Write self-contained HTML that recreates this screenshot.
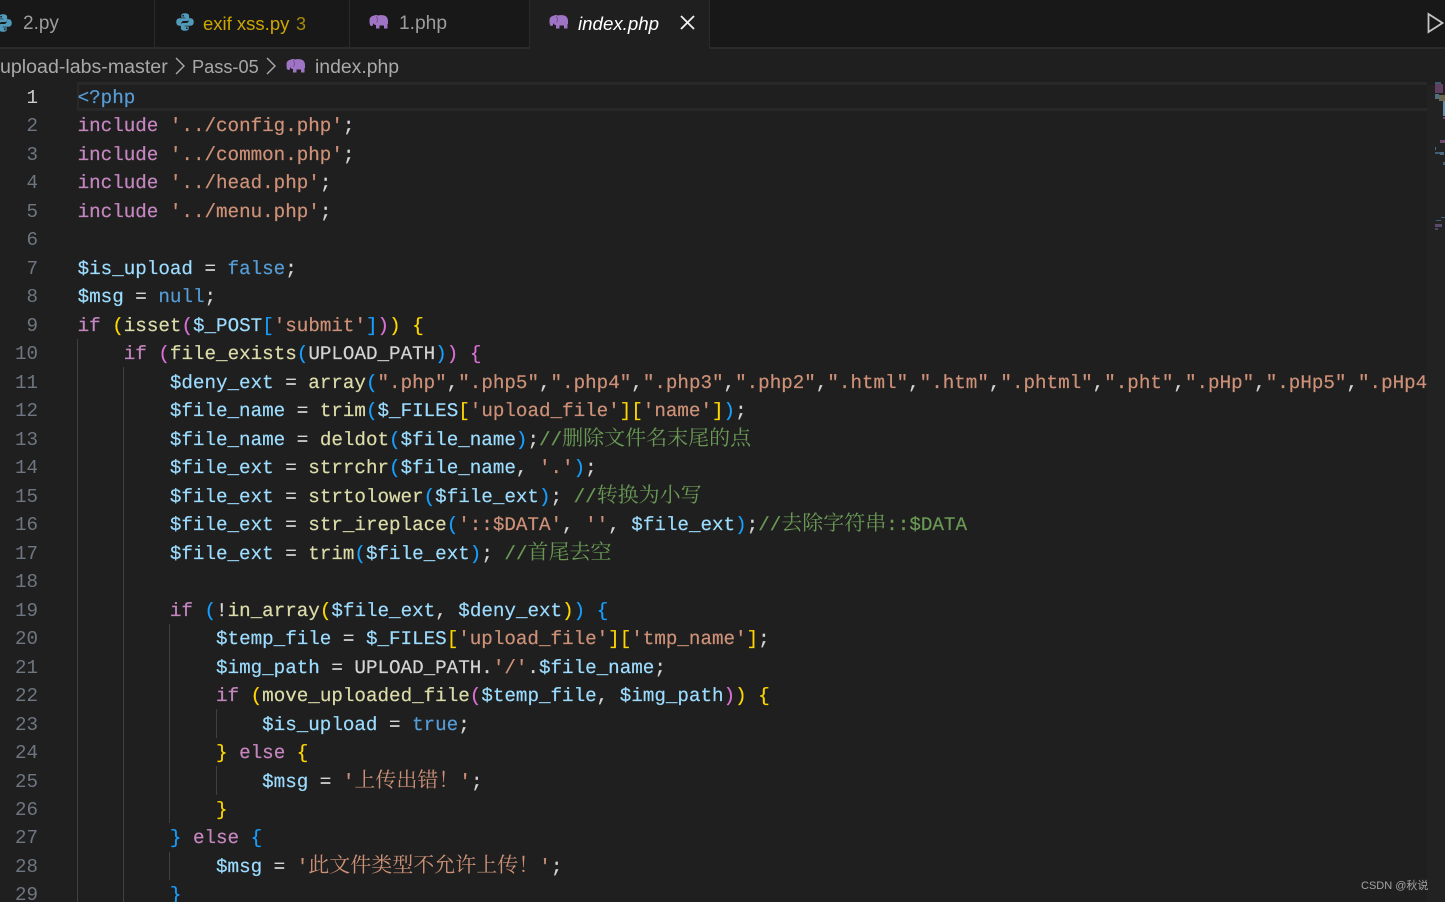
<!DOCTYPE html>
<html lang="zh">
<head>
<meta charset="utf-8">
<title>index.php</title>
<style>
html,body{margin:0;padding:0;background:#1f1f1f;}
#app{position:relative;width:1445px;height:902px;overflow:hidden;background:#1f1f1f;}
.abs{position:absolute;}
.ui{font-family:"Liberation Sans","Noto Sans CJK SC",sans-serif;white-space:pre;position:absolute;}
#code{position:absolute;left:0;top:1px;width:1445px;height:901px;}
.ln{position:absolute;left:0;width:38px;text-align:right;height:28.48px;font:19.2px/28.48px "Liberation Mono",monospace;color:#6e7681;}
.l{position:absolute;left:77.6px;height:28.48px;white-space:pre;font:19.23px/28.48px "Liberation Mono","Noto Serif CJK SC",monospace;color:#d4d4d4;text-rendering:geometricPrecision;-webkit-text-stroke:.2px;}
.l i{font-style:normal;font-family:"Noto Serif CJK SC",serif;font-size:21px;line-height:0;-webkit-text-stroke:0;}
.k{color:#c586c0}.f{color:#dcdcaa}.v{color:#9cdcfe}.s{color:#ce9178}.c{color:#6a9955}.b{color:#569cd6}
.y{color:#ffd700}.p{color:#da70d6}.u{color:#179fff}
.g{position:absolute;width:1px;background:#404040;}
.m{position:absolute;}
</style>
</head>
<body>
<div id="app">
<!-- tab bar -->
<div class="abs" style="left:0;top:0;width:1445px;height:47px;background:#181818"></div>
<div class="abs" style="left:0;top:47px;width:1445px;height:2px;background:#2b2b2b"></div>
<div class="abs" style="left:154px;top:0;width:1px;height:47px;background:#2b2b2b"></div>
<div class="abs" style="left:349px;top:0;width:1px;height:47px;background:#2b2b2b"></div>
<div class="abs" style="left:529px;top:0;width:181px;height:49px;background:#1f1f1f;border-left:1px solid #2b2b2b;border-right:1px solid #2b2b2b;box-sizing:border-box"></div>

<svg class="abs" style="left:-8px;top:13px" width="22" height="20" viewBox="0 0 16 16"><path fill="#519aba" d="M8 1c-2.500 0-3 1-3 2v1.500h3.200V5H3.500C2 5 1 6.200 1 8s1 3 2.300 3H5V9.300C5 8 6 7.200 7.200 7.200h2.400c1 0 1.700-.7 1.700-1.700V3C11.300 1.800 10 1 8 1zM6.500 2.300a.7.7 0 1 1 0 1.400.7.7 0 0 1 0-1.400z"/><path fill="#519aba" d="M8 15c2.500 0 3-1 3-2v-1.500H7.800V11h4.700c1.500 0 2.500-1.200 2.500-3s-1-3-2.300-3H11v1.700C11 8 10 8.800 8.800 8.800H6.400c-1 0-1.700.7-1.700 1.700V13c0 1.200 1.300 2 3.300 2zm1.500-1.300a.7.7 0 1 1 0-1.400.7.7 0 0 1 0 1.400z"/></svg>
<div class="ui" style="left:23px;top:11px;font-size:19px;line-height:26px;color:#9d9d9d">2.py</div>

<svg class="abs" style="left:175px;top:12px" width="20" height="20" viewBox="0 0 16 16"><path fill="#519aba" d="M8 1c-2.500 0-3 1-3 2v1.500h3.200V5H3.500C2 5 1 6.200 1 8s1 3 2.300 3H5V9.300C5 8 6 7.200 7.200 7.200h2.400c1 0 1.700-.7 1.700-1.700V3C11.300 1.800 10 1 8 1zM6.500 2.300a.7.7 0 1 1 0 1.400.7.7 0 0 1 0-1.400z"/><path fill="#519aba" d="M8 15c2.500 0 3-1 3-2v-1.500H7.800V11h4.700c1.500 0 2.500-1.200 2.500-3s-1-3-2.300-3H11v1.700C11 8 10 8.800 8.800 8.800H6.400c-1 0-1.700.7-1.700 1.700V13c0 1.200 1.300 2 3.300 2zm1.500-1.300a.7.7 0 1 1 0-1.400.7.7 0 0 1 0 1.400z"/></svg>
<div class="ui" style="left:203px;top:11px;font-size:18.5px;line-height:26px;color:#cca700">exif xss.py</div>
<div class="ui" style="left:296px;top:11px;font-size:18px;line-height:26px;color:#a58a0c">3</div>

<svg class="abs" style="left:369px;top:14px" width="20" height="16" viewBox="0 0 20 16"><path fill="#a074c4" d="M5 1.500C7 .8 8 1 9 1.600C10 1 12 1 14 1.200C17 1.500 19 3.500 19 7V10H18.500V14.500H15V11.500H10.500V14.500H7V11C5.500 11 4.500 10 4 9V11C3.500 12.500 1.500 12 1 11C.5 9.500 .5 8 .5 6C.5 3.500 2.500 2 5 1.500Z"/><path fill="none" stroke="#6f4f8f" stroke-width=".8" d="M7 2.500c2 1.500 2 4.500.3 6"/></svg>
<div class="ui" style="left:399px;top:11px;font-size:19.2px;line-height:26px;color:#9d9d9d">1.php</div>

<svg class="abs" style="left:549px;top:14px" width="20" height="16" viewBox="0 0 20 16"><path fill="#a074c4" d="M5 1.500C7 .8 8 1 9 1.600C10 1 12 1 14 1.200C17 1.500 19 3.500 19 7V10H18.500V14.500H15V11.500H10.500V14.500H7V11C5.500 11 4.500 10 4 9V11C3.500 12.500 1.500 12 1 11C.5 9.500 .5 8 .5 6C.5 3.500 2.500 2 5 1.500Z"/><path fill="none" stroke="#6f4f8f" stroke-width=".8" d="M7 2.500c2 1.500 2 4.500.3 6"/></svg>
<div class="ui" style="left:578px;top:11px;font-size:18.7px;line-height:26px;color:#ffffff;font-style:italic">index.php</div>
<svg class="abs" style="left:680px;top:15px" width="15" height="15" viewBox="0 0 15 15"><path d="M1 1L14 14M14 1L1 14" stroke="#f2f2f2" stroke-width="1.800" fill="none"/></svg>

<svg class="abs" style="left:1427px;top:12px" width="18" height="22" viewBox="0 0 18 22"><path d="M1.500 2L15.500 11L1.500 20Z" fill="none" stroke="#c5c5c5" stroke-width="1.800"/></svg>

<!-- breadcrumb -->
<div class="ui" style="left:0;top:54px;font-size:19.6px;line-height:26px;color:#a9a9a9">upload-labs-master</div>
<svg class="abs" style="left:174px;top:56px" width="12" height="20" viewBox="0 0 12 20"><path d="M2 2L10 10L2 18" fill="none" stroke="#a9a9a9" stroke-width="1.400"/></svg>
<div class="ui" style="left:192px;top:54px;font-size:18.2px;line-height:26px;color:#a9a9a9">Pass-05</div>
<svg class="abs" style="left:265px;top:56px" width="12" height="20" viewBox="0 0 12 20"><path d="M2 2L10 10L2 18" fill="none" stroke="#a9a9a9" stroke-width="1.400"/></svg>
<svg class="abs" style="left:286px;top:58px" width="20" height="16" viewBox="0 0 20 16"><path fill="#a074c4" d="M5 1.500C7 .8 8 1 9 1.600C10 1 12 1 14 1.200C17 1.500 19 3.500 19 7V10H18.500V14.500H15V11.500H10.500V14.500H7V11C5.500 11 4.500 10 4 9V11C3.500 12.500 1.500 12 1 11C.5 9.500 .5 8 .5 6C.5 3.500 2.500 2 5 1.500Z"/><path fill="none" stroke="#6f4f8f" stroke-width=".8" d="M7 2.500c2 1.500 2 4.500.3 6"/></svg>
<div class="ui" style="left:315px;top:54px;font-size:19.4px;line-height:26px;color:#a9a9a9">index.php</div>

<!-- current line highlight -->
<div class="abs" style="left:77px;top:82px;width:1350px;height:3px;background:#282828"></div>
<div class="abs" style="left:77px;top:108px;width:1350px;height:3px;background:#282828"></div>
<div class="abs" style="left:77px;top:82px;width:2px;height:29px;background:#282828"></div>

<!-- indent guides -->
<div class="g" style="left:77px;top:339px;height:563px"></div>
<div class="g" style="left:123px;top:367px;height:535px"></div>
<div class="g" style="left:169px;top:624px;height:199px"></div>
<div class="g" style="left:169px;top:852px;height:28px"></div>
<div class="g" style="left:216px;top:709px;height:29px"></div>
<div class="g" style="left:216px;top:766px;height:29px"></div>

<div id="code">
<!-- line numbers -->
<div class="ln" style="top:83px;color:#cccccc">1</div>
<div class="ln" style="top:111.480px">2</div>
<div class="ln" style="top:139.960px">3</div>
<div class="ln" style="top:168.440px">4</div>
<div class="ln" style="top:196.920px">5</div>
<div class="ln" style="top:225.400px">6</div>
<div class="ln" style="top:253.880px">7</div>
<div class="ln" style="top:282.360px">8</div>
<div class="ln" style="top:310.840px">9</div>
<div class="ln" style="top:339.320px">10</div>
<div class="ln" style="top:367.800px">11</div>
<div class="ln" style="top:396.280px">12</div>
<div class="ln" style="top:424.760px">13</div>
<div class="ln" style="top:453.240px">14</div>
<div class="ln" style="top:481.720px">15</div>
<div class="ln" style="top:510.200px">16</div>
<div class="ln" style="top:538.680px">17</div>
<div class="ln" style="top:567.160px">18</div>
<div class="ln" style="top:595.640px">19</div>
<div class="ln" style="top:624.120px">20</div>
<div class="ln" style="top:652.600px">21</div>
<div class="ln" style="top:681.080px">22</div>
<div class="ln" style="top:709.560px">23</div>
<div class="ln" style="top:738.040px">24</div>
<div class="ln" style="top:766.520px">25</div>
<div class="ln" style="top:795px">26</div>
<div class="ln" style="top:823.480px">27</div>
<div class="ln" style="top:851.960px">28</div>
<div class="ln" style="top:880.440px">29</div>

<!-- code -->
<div class="l" style="top:83px"><span class="b">&lt;?php</span></div>
<div class="l" style="top:111.480px"><span class="k">include</span> <span class="s">'../config.php'</span>;</div>
<div class="l" style="top:139.960px"><span class="k">include</span> <span class="s">'../common.php'</span>;</div>
<div class="l" style="top:168.440px"><span class="k">include</span> <span class="s">'../head.php'</span>;</div>
<div class="l" style="top:196.920px"><span class="k">include</span> <span class="s">'../menu.php'</span>;</div>
<div class="l" style="top:253.880px"><span class="v">$is_upload</span> = <span class="b">false</span>;</div>
<div class="l" style="top:282.360px"><span class="v">$msg</span> = <span class="b">null</span>;</div>
<div class="l" style="top:310.840px"><span class="k">if</span> <span class="y">(</span><span class="f">isset</span><span class="p">(</span><span class="v">$_POST</span><span class="u">[</span><span class="s">'submit'</span><span class="u">]</span><span class="p">)</span><span class="y">)</span> <span class="y">{</span></div>
<div class="l" style="top:339.320px">    <span class="k">if</span> <span class="p">(</span><span class="f">file_exists</span><span class="u">(</span>UPLOAD_PATH<span class="u">)</span><span class="p">)</span> <span class="p">{</span></div>
<div class="l" style="top:367.800px">        <span class="v">$deny_ext</span> = <span class="f">array</span><span class="u">(</span><span class="s">".php"</span>,<span class="s">".php5"</span>,<span class="s">".php4"</span>,<span class="s">".php3"</span>,<span class="s">".php2"</span>,<span class="s">".html"</span>,<span class="s">".htm"</span>,<span class="s">".phtml"</span>,<span class="s">".pht"</span>,<span class="s">".pHp"</span>,<span class="s">".pHp5"</span>,<span class="s">".pHp4</span></div>
<div class="l" style="top:396.280px">        <span class="v">$file_name</span> = <span class="f">trim</span><span class="u">(</span><span class="v">$_FILES</span><span class="y">[</span><span class="s">'upload_file'</span><span class="y">][</span><span class="s">'name'</span><span class="y">]</span><span class="u">)</span>;</div>
<div class="l" style="top:424.760px">        <span class="v">$file_name</span> = <span class="f">deldot</span><span class="u">(</span><span class="v">$file_name</span><span class="u">)</span>;<span class="c">//<i>删除文件名末尾的点</i></span></div>
<div class="l" style="top:453.240px">        <span class="v">$file_ext</span> = <span class="f">strrchr</span><span class="u">(</span><span class="v">$file_name</span>, <span class="s">'.'</span><span class="u">)</span>;</div>
<div class="l" style="top:481.720px">        <span class="v">$file_ext</span> = <span class="f">strtolower</span><span class="u">(</span><span class="v">$file_ext</span><span class="u">)</span>; <span class="c">//<i>转换为小写</i></span></div>
<div class="l" style="top:510.200px">        <span class="v">$file_ext</span> = <span class="f">str_ireplace</span><span class="u">(</span><span class="s">'::$DATA'</span>, <span class="s">''</span>, <span class="v">$file_ext</span><span class="u">)</span>;<span class="c">//<i>去除字符串</i>::$DATA</span></div>
<div class="l" style="top:538.680px">        <span class="v">$file_ext</span> = <span class="f">trim</span><span class="u">(</span><span class="v">$file_ext</span><span class="u">)</span>; <span class="c">//<i>首尾去空</i></span></div>
<div class="l" style="top:595.640px">        <span class="k">if</span> <span class="u">(</span>!<span class="f">in_array</span><span class="y">(</span><span class="v">$file_ext</span>, <span class="v">$deny_ext</span><span class="y">)</span><span class="u">)</span> <span class="u">{</span></div>
<div class="l" style="top:624.120px">            <span class="v">$temp_file</span> = <span class="v">$_FILES</span><span class="y">[</span><span class="s">'upload_file'</span><span class="y">][</span><span class="s">'tmp_name'</span><span class="y">]</span>;</div>
<div class="l" style="top:652.600px">            <span class="v">$img_path</span> = UPLOAD_PATH.<span class="s">'/'</span>.<span class="v">$file_name</span>;</div>
<div class="l" style="top:681.080px">            <span class="k">if</span> <span class="y">(</span><span class="f">move_uploaded_file</span><span class="p">(</span><span class="v">$temp_file</span>, <span class="v">$img_path</span><span class="p">)</span><span class="y">)</span> <span class="y">{</span></div>
<div class="l" style="top:709.560px">                <span class="v">$is_upload</span> = <span class="b">true</span>;</div>
<div class="l" style="top:738.040px">            <span class="y">}</span> <span class="k">else</span> <span class="y">{</span></div>
<div class="l" style="top:766.520px">                <span class="v">$msg</span> = <span class="s">'<i>上传出错！</i>'</span>;</div>
<div class="l" style="top:795px">            <span class="y">}</span></div>
<div class="l" style="top:823.480px">        <span class="u">}</span> <span class="k">else</span> <span class="u">{</span></div>
<div class="l" style="top:851.960px">            <span class="v">$msg</span> = <span class="s">'<i>此文件类型不允许上传！</i>'</span>;</div>
<div class="l" style="top:880.440px">        <span class="u">}</span></div>
</div>

<!-- minimap -->
<div class="abs" style="left:1427px;top:85px;width:18px;height:817px;background:#222222"></div>
<div class="m" style="left:1435px;top:82px;width:6px;height:2px;background:#3d5a74"></div>
<div class="m" style="left:1435px;top:84px;width:8px;height:9px;background:#5f3f62"></div>
<div class="m" style="left:1435px;top:94px;width:4px;height:5px;background:#4f6f85"></div>
<div class="m" style="left:1439px;top:95px;width:6px;height:6px;background:#6b6650"></div>
<div class="m" style="left:1443px;top:101px;width:2px;height:15px;background:#5f8fa8"></div>
<div class="m" style="left:1443px;top:117px;width:2px;height:2px;background:#6f4a6f"></div>
<div class="m" style="left:1440px;top:140px;width:5px;height:3px;background:#6f4a6f"></div>
<div class="m" style="left:1435px;top:147px;width:1px;height:3px;background:#3f6f98"></div>
<div class="m" style="left:1435px;top:152px;width:5px;height:2px;background:#3f5f78"></div>
<div class="m" style="left:1440px;top:152px;width:4px;height:3px;background:#4a6a80"></div>
<div class="m" style="left:1443px;top:162px;width:2px;height:3px;background:#3f5f78"></div>
<div class="m" style="left:1441px;top:217px;width:4px;height:1px;background:#3f5f78"></div>
<div class="m" style="left:1436px;top:220px;width:5px;height:1px;background:#3f5f78"></div>
<div class="m" style="left:1435px;top:224px;width:7px;height:3px;background:#5b4a70"></div>
<div class="m" style="left:1435px;top:228px;width:3px;height:2px;background:#4a4a60"></div>

<!-- watermark -->
<div class="ui" style="left:1361px;top:879px;font-size:11px;line-height:14px;color:#a3a3a3">CSDN @秋说</div>
</div>
</body>
</html>
